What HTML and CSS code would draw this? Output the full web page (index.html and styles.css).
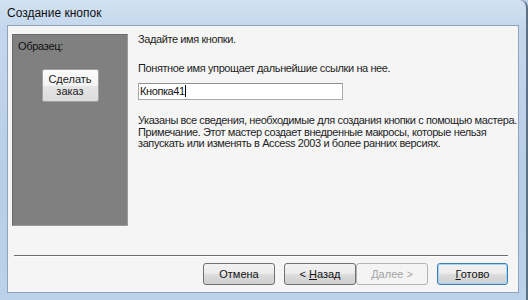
FILE: index.html
```html
<!DOCTYPE html>
<html lang="ru">
<head>
    <meta charset="UTF-8">
    <title>Создание кнопок</title>
    <link rel="stylesheet" href="styles.css">
</head>
<body>
    <div class="window">
        <div class="titlebar">Создание кнопок</div>

        <div class="client">
            <div class="main">
                <!-- preview of the button -->
                <div class="sample">
                    <div class="sample-label">Образец:</div>
                    <div class="sample-btn">Сделать<br>заказ</div>
                </div>

                <div class="content">
                    <p class="line first">Задайте имя кнопки.</p>
                    <p class="line">Понятное имя упрощает дальнейшие ссылки на нее.</p>
                    <div class="name-input">Кнопка41<span class="caret"></span></div>
                    <p class="info">Указаны все сведения, необходимые для создания кнопки с помощью мастера.<br>
                    Примечание. Этот мастер создает внедренные макросы, которые нельзя<br>
                    запускать или изменять в Access 2003 и более ранних версиях.</p>
                </div>
            </div>

            <div class="separator"></div>

            <div class="buttons">
                <button class="btn">Отмена</button>
                <div class="nav">
                    <button class="btn">&lt; <u>Н</u>азад</button>
                    <button class="btn disabled"><u>Д</u>алее &gt;</button>
                </div>
                <button class="btn default"><u>Г</u>отово</button>
            </div>
        </div>
    </div>
</body>
</html>
```

FILE: styles.css
```css
html, body {
    margin: 0;
    padding: 0;
}

body {
    font-family: 'Liberation Sans', Arial, sans-serif;
    font-size: 11px;
    color: #1e1e1e;
    background: #b9cfe6;
}

.window {
    width: 528px;
    height: 300px;
    box-sizing: border-box;
    background: linear-gradient(180deg, #d2e1f1 0%, #c3d7ec 10%, #b8cee7 60%, #bcd2ea 100%);
    border-right: 2px solid #5d6f82;
    border-top-right-radius: 8px;
    display: flex;
    flex-direction: column;
}

.titlebar {
    height: 25px;
    line-height: 26px;
    padding-left: 7px;
    font-size: 12px;
    color: #111;
}

.client {
    margin-left: 7px;
    width: 512px;
    height: 268px;
    box-sizing: border-box;
    background: #f5f5f5;
    border: 1px solid #8ea4bc;
    display: flex;
    flex-direction: column;
}

.main {
    display: flex;
    padding-top: 8px;
    padding-left: 4px;
    height: 193px;
}

.sample {
    flex-shrink: 0;
    width: 116px;
    height: 192px;
    box-sizing: border-box;
    background: #808080;
    border: 1px solid #6b6b6b;
    border-right-color: #9a9a9a;
    border-bottom-color: #9a9a9a;
}

.sample-label {
    color: #111;
    padding: 5px 0 0 5px;
    letter-spacing: -0.3px;
}

.sample-btn {
    width: 57px;
    height: 33px;
    box-sizing: border-box;
    margin: 17px auto 0;
    border: 1px solid #a0a0a0;
    border-radius: 2px;
    background: linear-gradient(180deg, #fbfbfb 0%, #f3f3f3 50%, #e6e6e6 51%, #dcdcdc 100%);
    text-align: center;
    line-height: 12px;
    padding-top: 3px;
    color: #222;
}

.content {
    flex: 1;
    margin-left: 10px;
    letter-spacing: -0.4px;
}

.line {
    margin: 0;
    line-height: 13px;
}

.line.first {
    margin-top: -1px;
    margin-bottom: 16px;
}

.name-input {
    margin-top: 8px;
    width: 205px;
    height: 17px;
    box-sizing: border-box;
    background: #fff;
    border: 1px solid #a9a9a9;
    border-top-color: #8f8f8f;
    line-height: 15px;
    padding-left: 1px;
    color: #111;
}

.caret {
    display: inline-block;
    width: 1px;
    height: 12px;
    background: #000;
    vertical-align: -2px;
}

.info {
    margin: 15px 0 0;
    line-height: 11.5px;
    white-space: nowrap;
}

.separator {
    margin: 28px 10px 0 6px;
    height: 1px;
    background: #6e6e6e;
    border-bottom: 1px solid #fff;
}

.buttons {
    display: flex;
    justify-content: flex-end;
    gap: 9px;
    margin-top: 6px;
    padding-right: 10px;
}

.nav {
    display: flex;
}

.btn {
    width: 72px;
    height: 22px;
    box-sizing: border-box;
    font-family: 'Liberation Sans', Arial, sans-serif;
    font-size: 11px;
    color: #111;
    border: 1px solid #707070;
    border-radius: 3px;
    background: linear-gradient(180deg, #f2f2f2 0%, #ebebeb 50%, #dddddd 51%, #cfcfcf 100%);
    padding: 0;
}

.btn.disabled {
    color: #a3a3a3;
    border-color: #b5b5b5;
    background: #f4f4f4;
}

.btn.default {
    width: 71px;
    border-color: #3c7fb1;
    box-shadow: inset 0 0 0 1px #9fd7f5;
}

.btn u {
    text-decoration: underline;
}
```
